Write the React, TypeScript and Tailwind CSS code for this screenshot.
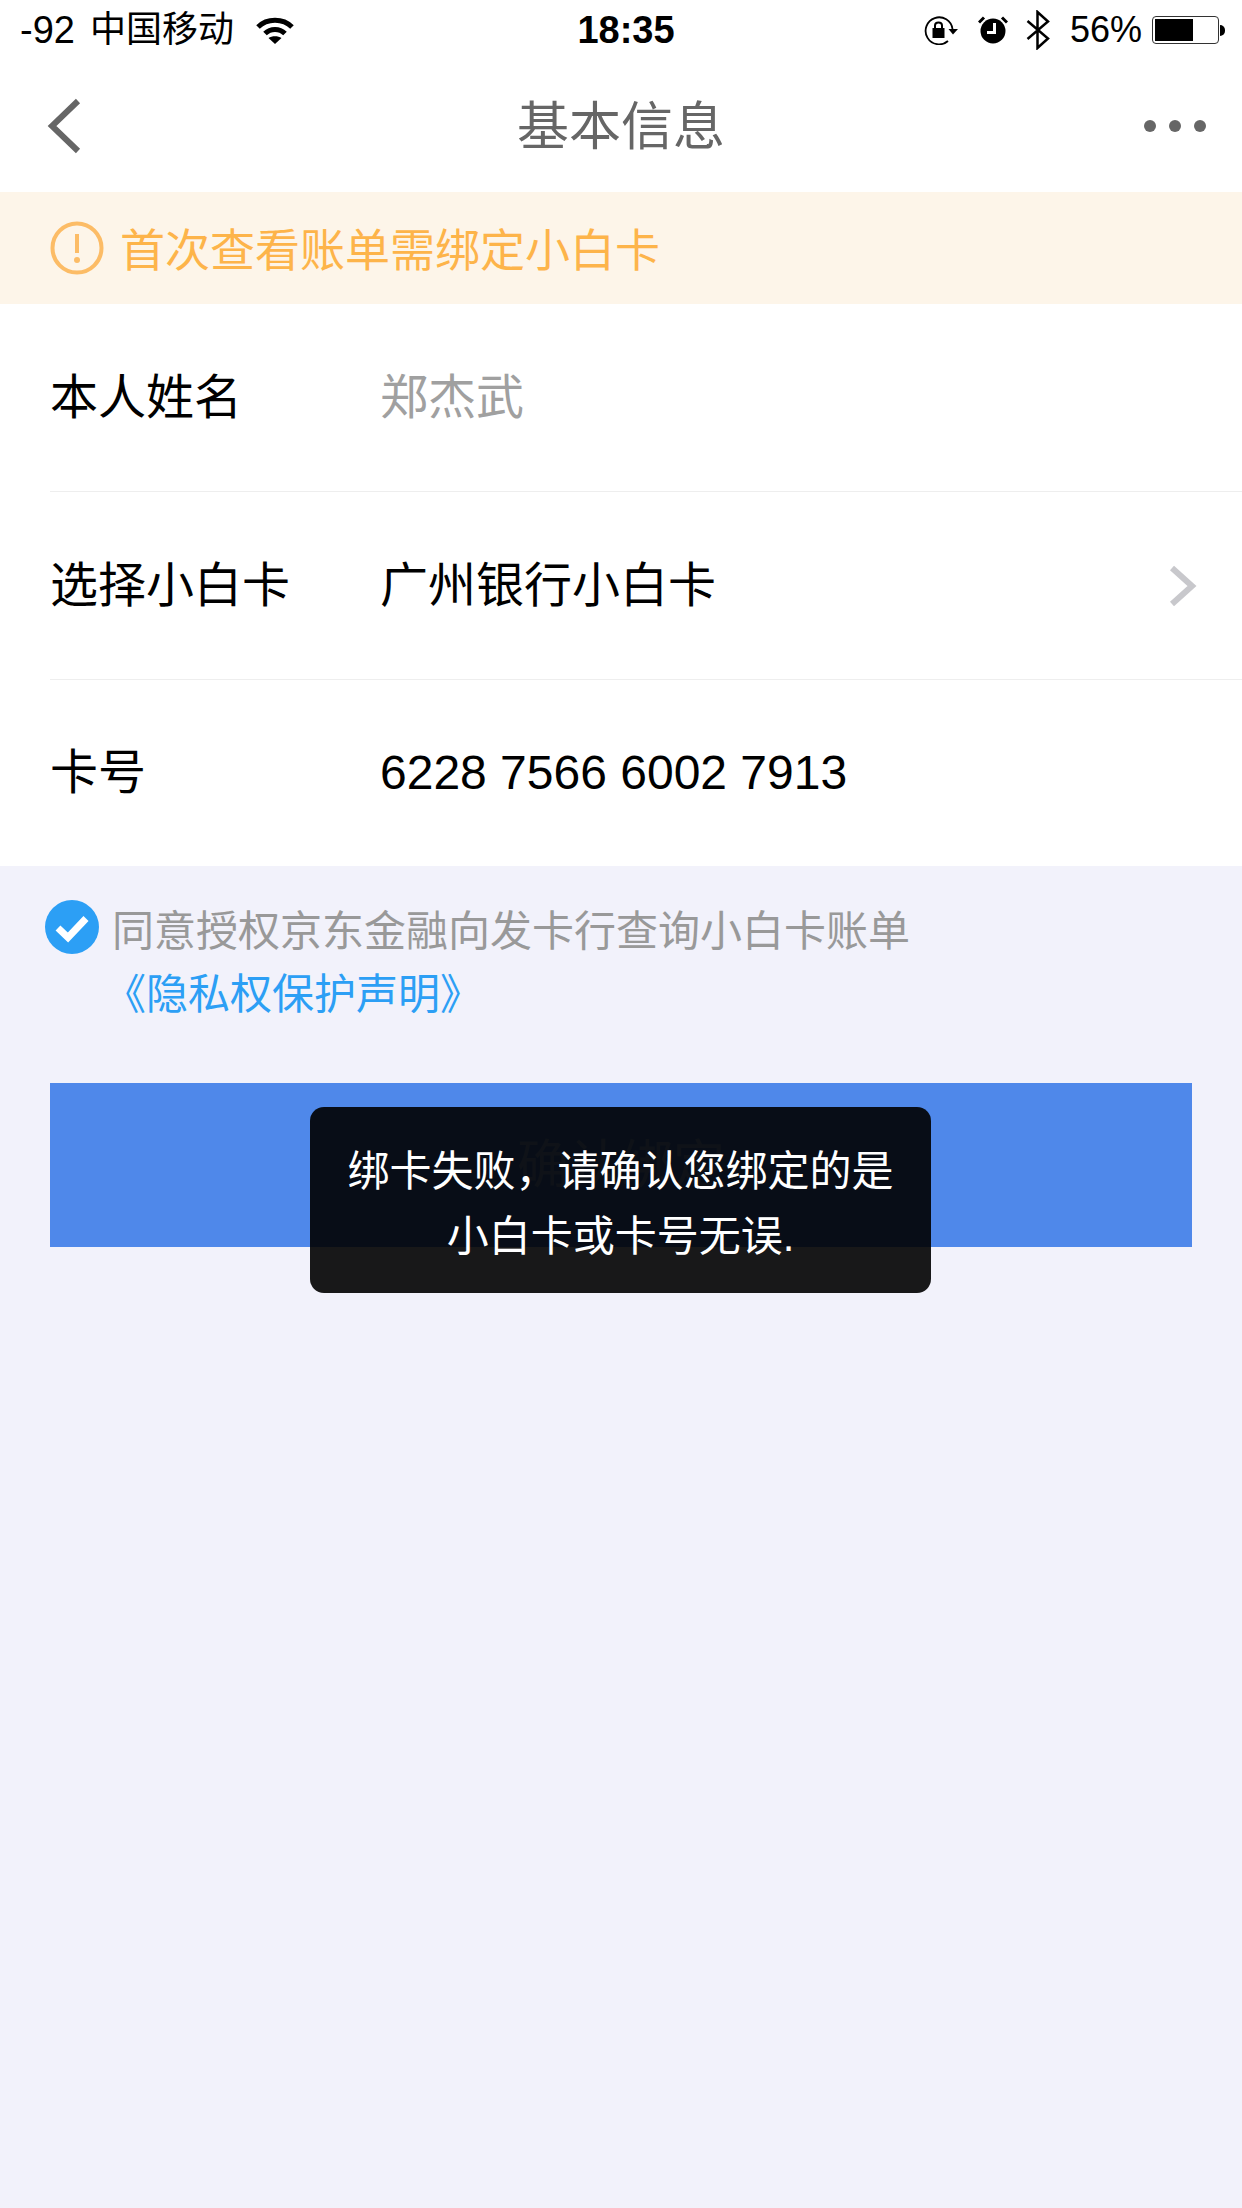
const fontStack = "font-['Liberation_Sans','Noto_Sans_CJK_SC',sans-serif]";

function Wifi() {
  return (
    <svg width="38" height="27" viewBox="0 0 38 27" fill="none">
      <path d="M2 10C11 1 27 1 36 10" stroke="#000" strokeWidth="5" />
      <path d="M9 16.5C14.5 11 23.5 11 29 16.5" stroke="#000" strokeWidth="5" />
      <path d="M19 27L12.5 21C16 18.5 22 18.5 25.5 21Z" fill="#000" />
    </svg>
  );
}

function RotationLock() {
  return (
    <svg width="35" height="30" viewBox="0 0 35 30" fill="none">
      <path d="M28.5 14A13.5 13.5 0 1 0 24 26" stroke="#000" strokeWidth="1.8" />
      <path d="M24.5 14H34L29 19.5Z" fill="#000" />
      <rect x="8.5" y="13" width="12" height="10" fill="#000" />
      <path d="M11 13V10.5C11 6.5 18 6.5 18 10.5V13" stroke="#000" strokeWidth="2" />
    </svg>
  );
}

function Alarm() {
  return (
    <svg width="30" height="28" viewBox="0 0 30 28" fill="none">
      <circle cx="15" cy="15" r="12.5" fill="#000" />
      <path d="M1 6.5L6 1.5M29 6.5L24 1.5" stroke="#000" strokeWidth="3" />
      <path d="M16.5 7V16.5H9" stroke="#fff" strokeWidth="3" />
    </svg>
  );
}

function Bluetooth() {
  return (
    <svg width="24" height="40" viewBox="0 0 24 40" fill="none">
      <path d="M1.5 11L22 28.5L11.5 38V2L22 11.5L1.5 29" stroke="#000" strokeWidth="2.5" />
    </svg>
  );
}

function Battery() {
  return (
    <div className="flex items-center">
      <div className="h-[28px] w-[67px] rounded-[4px] border border-[#333333] bg-white p-[2px]">
        <div className="h-full w-[38px] bg-black" />
      </div>
      <div className="ml-[1px] h-[11px] w-[5px] rounded-r-full bg-black" />
    </div>
  );
}

function Row({
  label,
  value,
  valueClass,
  last,
  arrow,
}: {
  label: string;
  value: string;
  valueClass: string;
  last?: boolean;
  arrow?: boolean;
}) {
  return (
    <div
      className={
        last
          ? "ml-[50px] flex h-[186px] items-center pr-[44px]"
          : "ml-[50px] flex h-[188px] items-center border-b border-[#eeeeee] pr-[44px]"
      }
    >
      <div className="w-[330px] text-[48px] text-black">{label}</div>
      <div className={valueClass}>{value}</div>
      {arrow && (
        <svg className="ml-auto" width="30" height="42" viewBox="0 0 30 42" fill="none">
          <path d="M4 3L24 21L4 39" stroke="#c8c8cc" strokeWidth="6" />
        </svg>
      )}
    </div>
  );
}

export default function App() {
  return (
    <div className={`${fontStack} flex min-h-[2208px] flex-col bg-[#f2f2fb]`}>
      {/* status bar */}
      <div className="grid h-[60px] grid-cols-[1fr_auto_1fr] items-center bg-white text-[36px] text-black">
        <div className="flex items-center pl-[20px]">
          <span className="text-[38px]">-92</span>
          <span className="ml-[15px]">中国移动</span>
          <span className="ml-[22px] flex">
            <Wifi />
          </span>
        </div>
        <div className="ml-[10px] text-[38px] font-bold">18:35</div>
        <div className="flex items-center justify-end pr-[17px]">
          <RotationLock />
          <span className="ml-[19px] flex">
            <Alarm />
          </span>
          <span className="ml-[18px] flex">
            <Bluetooth />
          </span>
          <span className="ml-[20px]">56%</span>
          <span className="ml-[10px] flex">
            <Battery />
          </span>
        </div>
      </div>

      {/* nav */}
      <div className="relative flex h-[132px] items-center justify-center bg-white">
        <svg className="absolute left-[46px] top-[38px]" width="36" height="56" viewBox="0 0 36 56" fill="none">
          <path d="M32 3L6 28L32 53" stroke="#666666" strokeWidth="6" />
        </svg>
        <div className="pt-[2px] text-[52px] text-[#666666]">基本信息</div>
        <div className="absolute right-[36px] top-[60px] flex gap-[13px]">
          <div className="size-[12px] rounded-full bg-[#666666]" />
          <div className="size-[12px] rounded-full bg-[#666666]" />
          <div className="size-[12px] rounded-full bg-[#666666]" />
        </div>
      </div>

      {/* tip */}
      <div className="flex h-[112px] items-center bg-[#fdf5e9] pl-[50px]">
        <svg width="54" height="54" viewBox="0 0 54 54" fill="none">
          <circle cx="27" cy="27" r="24.5" stroke="#fcbc66" strokeWidth="4" />
          <path d="M27 13V32" stroke="#fcbc66" strokeWidth="4" />
          <circle cx="27" cy="39" r="3" fill="#fcbc66" />
        </svg>
        <div className="ml-[16px] pt-[8px] text-[45px] text-[#fdb44a]">首次查看账单需绑定小白卡</div>
      </div>

      {/* form */}
      <div className="bg-white">
        <Row label="本人姓名" value="郑杰武" valueClass="text-[48px] text-[#a0a0a0]" />
        <Row label="选择小白卡" value="广州银行小白卡" valueClass="text-[48px] text-black" arrow />
        <Row label="卡号" value="6228 7566 6002 7913" valueClass="text-[48px] text-black" last />
      </div>

      {/* agreement */}
      <div className="flex items-start pl-[45px] pt-[34px]">
        <svg width="54" height="54" viewBox="0 0 54 54" fill="none">
          <circle cx="27" cy="27" r="27" fill="#2c9ff5" />
          <path d="M13 28L23 37.5L41 18.5" stroke="#fff" strokeWidth="7" />
        </svg>
        <div className="ml-[13px]">
          <div className="text-[42px] leading-[63px] text-[#999999]">同意授权京东金融向发卡行查询小白卡账单</div>
          <div className="-ml-[8px] text-[42px] leading-[63px] text-[#2c9ff5]">《隐私权保护声明》</div>
        </div>
      </div>

      {/* submit + toast */}
      <div className="relative mx-[50px] mt-[57px] flex h-[164px] items-center justify-center bg-[#4f88ea] text-[52px] text-white/40">
        确认绑定
        <div className="absolute left-[260px] top-[24px] flex h-[186px] w-[621px] flex-col items-center justify-center rounded-[14px] bg-black/90 pt-[7px] text-[42px] leading-[65px] text-white">
          <div>绑卡失败，请确认您绑定的是</div>
          <div>小白卡或卡号无误.</div>
        </div>
      </div>
    </div>
  );
}
